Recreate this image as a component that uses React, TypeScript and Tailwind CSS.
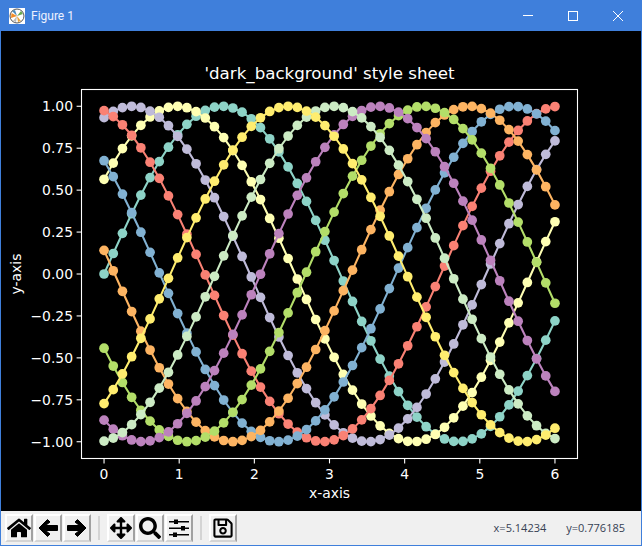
import { FaArrowsAlt, FaHome, FaRegSave, FaSearch } from 'react-icons/fa';
import type { ReactNode } from 'react';

const COLORS = [
  '#8dd3c7',
  '#feffb3',
  '#bfbbd9',
  '#fa8174',
  '#81b1d2',
  '#fdb462',
  '#b3de69',
  '#bc82bd',
  '#ccebc4',
  '#ffed6f',
];

const POINTS = 50;
const LEFT = 80.5;
const RIGHT = 576.5;
const TOP = 58.5;
const BOTTOM = 427.5;

function px(x: number) {
  return LEFT + ((x + 0.3) / 6.6) * (RIGHT - LEFT);
}

function py(y: number) {
  return BOTTOM - ((y + 1.1) / 2.2) * (BOTTOM - TOP);
}

function seriesPoints(shift: number) {
  return Array.from({ length: POINTS }, (_, i) => {
    const x = (i * 6) / (POINTS - 1);
    return [px(x), py(Math.sin(x + shift))];
  });
}

const X_TICKS = [0, 1, 2, 3, 4, 5, 6];
const Y_TICKS = ['1.00', '0.75', '0.50', '0.25', '0.00', '-0.25', '-0.50', '-0.75', '-1.00'];

function Chart() {
  return (
    <svg viewBox="0 0 640 480" className="block h-full w-full" fontFamily="'DejaVu Sans', sans-serif">
      {COLORS.map((color, i) => {
        const pts = seriesPoints((i * 6) / COLORS.length);
        return (
          <g key={color}>
            <polyline
              points={pts.map((p) => p.join(',')).join(' ')}
              fill="none"
              stroke={color}
              strokeWidth={2.08}
            />
            {pts.map((p, j) => (
              <circle key={j} cx={p[0]} cy={p[1]} r={4.86} fill={color} />
            ))}
          </g>
        );
      })}

      <rect x={LEFT} y={TOP} width={RIGHT - LEFT} height={BOTTOM - TOP} fill="none" stroke="white" strokeWidth={1.1} />

      {X_TICKS.map((t) => (
        <g key={t}>
          <line x1={px(t)} x2={px(t)} y1={BOTTOM} y2={BOTTOM + 4.9} stroke="white" strokeWidth={1.1} />
          <text x={px(t)} y={448} fill="white" fontSize={13.9} textAnchor="middle">
            {t}
          </text>
        </g>
      ))}

      {Y_TICKS.map((label) => {
        const y = py(parseFloat(label));
        return (
          <g key={label}>
            <line x1={LEFT - 4.9} x2={LEFT} y1={y} y2={y} stroke="white" strokeWidth={1.1} />
            <text x={LEFT - 8.5} y={y + 5} fill="white" fontSize={13.9} textAnchor="end">
              {label.replace('-', '\u2212')}
            </text>
          </g>
        );
      })}

      <text x={328.5} y={48} fill="white" fontSize={16.67} textAnchor="middle">
        'dark_background' style sheet
      </text>
      <text x={328.5} y={467} fill="white" fontSize={13.9} textAnchor="middle">
        x-axis
      </text>
      <text
        x={0}
        y={0}
        fill="white"
        fontSize={13.9}
        textAnchor="middle"
        transform="translate(20 243) rotate(-90)"
      >
        y-axis
      </text>
    </svg>
  );
}

function ToolButton({ children }: { children: ReactNode }) {
  return (
    <button className="flex h-7 w-7 items-center justify-center border-2 border-t-white border-r-neutral-400 border-b-neutral-300 border-l-white bg-[#f0f0f0] text-black">
      {children}
    </button>
  );
}

function Divider() {
  return <div className="mx-1.5 h-6 w-0.5 bg-neutral-300" />;
}

function ArrowLeftIcon() {
  return (
    <svg viewBox="0 0 24 24" className="h-6 w-6 shrink-0" fill="black" stroke="black" strokeLinejoin="round">
      <path d="M3 12 L11.5 3.5 L14 6 L9.5 9.5 H21.5 V14.5 H9.5 L14 18 L11.5 20.5 Z" />
    </svg>
  );
}

function ArrowRightIcon() {
  return (
    <svg viewBox="0 0 24 24" className="h-6 w-6 shrink-0" fill="black" stroke="black" strokeLinejoin="round">
      <path d="M21 12 L12.5 3.5 L10 6 L14.5 9.5 H2.5 V14.5 H14.5 L10 18 L12.5 20.5 Z" />
    </svg>
  );
}

function SlidersIcon() {
  return (
    <svg viewBox="0 0 24 24" className="h-6 w-6 shrink-0" fill="black">
      <rect x={2} y={5} width={20} height={1.5} />
      <rect x={2} y={11.5} width={20} height={1.5} />
      <rect x={2} y={18} width={20} height={1.5} />
      <rect x={7} y={3.5} width={4} height={4.5} />
      <rect x={14} y={10} width={4} height={4.5} />
      <rect x={6} y={16.5} width={4} height={4.5} />
    </svg>
  );
}

function AppIcon() {
  return (
    <svg viewBox="0 0 16 16" className="h-4 w-4 bg-white">
      <circle cx={8} cy={8} r={7} fill="none" stroke="#555" strokeWidth={1} />
      <path d="M8 8 L3 3 L6 2 Z" fill="#4b8bbe" />
      <path d="M8 8 L2 10 L2.5 5 Z" fill="#f28c28" />
      <path d="M8 8 L12 3 L14 6 Z" fill="#6aa84f" />
      <path d="M8 8 L12 13 L9 14 Z" fill="#e8a33d" />
      <path d="M8 8 L4 13 L7 14 Z" fill="#bbb" />
    </svg>
  );
}

export default function App() {
  return (
    <div className="flex h-[546px] w-[642px] flex-col border-x border-b border-[#3f7fdb] bg-[#3f7fdb]">
      <header className="flex h-[31px] shrink-0 items-center pl-2 text-white">
        <AppIcon />
        <span className="ml-1.5 text-xs text-indigo-50" style={{ fontFamily: 'Roboto, sans-serif' }}>
          Figure 1
        </span>
        <div className="ml-auto flex items-center gap-px pr-px">
          <div className="flex w-11 justify-center">
            <div className="h-px w-2.5 bg-white" />
          </div>
          <div className="flex w-11 justify-center">
            <div className="h-2.5 w-2.5 border border-white" />
          </div>
          <div className="flex w-11 justify-center">
            <svg viewBox="0 0 10 10" className="h-2.5 w-2.5" stroke="white" strokeWidth={1}>
              <path d="M0 0 L10 10 M10 0 L0 10" />
            </svg>
          </div>
        </div>
      </header>

      <main className="h-[480px] shrink-0 bg-black">
        <Chart />
      </main>

      <footer className="flex flex-1 items-center gap-px bg-[#f0f0f0] pl-1">
        <ToolButton>
          <FaHome size={24} className="shrink-0" />
        </ToolButton>
        <ToolButton>
          <ArrowLeftIcon />
        </ToolButton>
        <ToolButton>
          <ArrowRightIcon />
        </ToolButton>
        <Divider />
        <ToolButton>
          <FaArrowsAlt size={22} className="shrink-0" />
        </ToolButton>
        <ToolButton>
          <FaSearch size={22} className="shrink-0" />
        </ToolButton>
        <ToolButton>
          <SlidersIcon />
        </ToolButton>
        <Divider />
        <ToolButton>
          <FaRegSave size={22} className="shrink-0" />
        </ToolButton>
        <div
          className="ml-auto flex gap-5 pr-4 text-[11px] text-gray-700"
          style={{ fontFamily: "'Open Sans', sans-serif" }}
        >
          <span>x=5.14234</span>
          <span>y=0.776185</span>
        </div>
      </footer>
    </div>
  );
}
